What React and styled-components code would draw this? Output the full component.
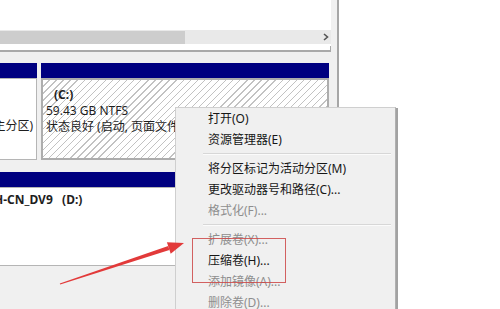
import React from "react";
import styled, { createGlobalStyle } from "styled-components";

const Global = createGlobalStyle`
  html, body { margin: 0; padding: 0; background: #fff; }
  body {
    font-family: "Noto Sans", "Noto Sans CJK SC", sans-serif;
    font-size: 12px;
    color: #1e1e1e;
    overflow: hidden;
  }
`;

const Stage = styled.div`
  position: relative;
  width: 500px;
  height: 309px;
  overflow: hidden;
  display: flex;
  background: #fff;
`;

const Window = styled.div`
  width: 337px;
  height: 100%;
  flex: none;
  background: #f0f0f0;
  border-right: 2px solid #a6a6a6;
  display: flex;
  flex-direction: column;
  overflow: hidden;
`;

const ListView = styled.div`
  position: relative;
  width: 331px;
  height: 52px;
  flex: none;
  box-sizing: border-box;
  background: #fff;
  border-bottom: 2px solid #a9a9a9;
  display: flex;
  flex-direction: column;
  padding-top: 30px;
  &::after {
    content: "";
    position: absolute;
    right: 0;
    bottom: 0;
    width: 1px;
    height: 4px;
    background: #a9a9a9;
  }
`;

const HScroll = styled.div`
  height: 14px;
  background: #e9e9e9;
  display: flex;
  align-items: center;
  justify-content: space-between;
`;

const Thumb = styled.div`
  width: 185px;
  height: 13px;
  background: #cdcdcd;
`;

const ScrollArrow = styled.div`
  width: 12px;
  display: flex;
  align-items: center;
  justify-content: center;
  margin-right: -1px;
`;

const DiskArea = styled.div`
  display: flex;
  flex-direction: column;
  gap: 12px;
  padding-top: 11px;
`;

const DiskRow = styled.div`
  display: flex;
  gap: 4px;
  width: 329px;
`;

const Partition = styled.div`
  display: flex;
  flex-direction: column;
  width: ${(p) => p.$w}px;
  flex: ${(p) => (p.$w ? "none" : "1")};
  min-width: 0;
`;

const PartHeader = styled.div`
  height: 15px;
  background: #000080;
`;

const PartBody = styled.div`
  height: ${(p) => p.$h}px;
  box-sizing: border-box;
  border: ${(p) => (p.$selected ? "2px solid #adadad" : "1px solid #b5b5b5")};
  border-left-width: ${(p) => (p.$cutLeft ? 0 : p.$selected ? 2 : 1)}px;
  background: ${(p) =>
    p.$selected
      ? "repeating-linear-gradient(135deg, #ffffff 0 4px, #c2c2c2 4px 5px)"
      : "#ffffff"};
  padding: ${(p) => (p.$selected ? "7px 0 0 3px" : "4px 0 0 0")};
  display: flex;
  flex-direction: column;
  overflow: hidden;
`;

const Line = styled.div`
  height: 16px;
  line-height: 16px;
  white-space: pre;
  display: flex;
  justify-content: ${(p) => (p.$end ? "flex-end" : "flex-start")};
  padding-right: ${(p) => (p.$end ? "3px" : "0")};
  font-weight: ${(p) => (p.$bold ? 700 : 400)};
  margin-left: ${(p) => p.$indent || 0}px;
  color: #1e1e1e;
`;

const Menu = styled.div`
  position: absolute;
  left: 175px;
  top: 107px;
  width: 221px;
  height: 220px;
  box-sizing: border-box;
  background: #f0f0f0;
  border: 1px solid #cfcfcf;
  border-right: 1px solid #b0b0b0;
  box-shadow: 2px 1px 0 #a2a2a2;
  display: flex;
  flex-direction: column;
`;

const Item = styled.div`
  height: 21px;
  line-height: 21px;
  padding-left: 32px;
  white-space: nowrap;
  color: ${(p) => (p.$disabled ? "#8e8e8e" : "#161616")};
`;

const Separator = styled.div`
  height: 8px;
  display: flex;
  align-items: center;
  margin: 0 4px 0 27px;
  &::before {
    content: "";
    flex: 1;
    height: 1px;
    background: #d7d7d7;
    border-bottom: 1px solid #fbfbfb;
  }
`;

const Highlight = styled.div`
  position: absolute;
  left: 192px;
  top: 238px;
  width: 94px;
  height: 45px;
  box-sizing: border-box;
  border: 1px solid rgba(205, 70, 70, 0.85);
  pointer-events: none;
`;

const ArrowLayer = styled.svg`
  position: absolute;
  left: 0;
  top: 0;
  pointer-events: none;
`;

const menuItems = [
  { t: "打开(O)" },
  { t: "资源管理器(E)" },
  { sep: true },
  { t: "将分区标记为活动分区(M)" },
  { t: "更改驱动器号和路径(C)..." },
  { t: "格式化(F)...", d: true },
  { sep: true },
  { t: "扩展卷(X)...", d: true },
  { t: "压缩卷(H)..." },
  { t: "添加镜像(A)...", d: true },
  { t: "删除卷(D)...", d: true },
];

export default function App() {
  return (
    <>
      <Global />
      <Stage>
        <Window>
          <ListView>
            <HScroll>
              <Thumb />
              <ScrollArrow>
                <svg width="6" height="8" viewBox="0 0 6 8">
                  <path d="M1 1 L4.5 4 L1 7" fill="none" stroke="#555" strokeWidth="1.6" />
                </svg>
              </ScrollArrow>
            </HScroll>
          </ListView>
          <DiskArea>
            <DiskRow>
              <Partition $w={37}>
                <PartHeader />
                <PartBody $h={82} $cutLeft style={{ paddingTop: 39 }}>
                  <Line $end>状态良好 (系统, 活动, 主分区)</Line>
                </PartBody>
              </Partition>
              <Partition>
                <PartHeader />
                <PartBody $h={82} $selected>
                  <Line $bold $indent={8}>(C:)</Line>
                  <Line>59.43 GB NTFS</Line>
                  <Line>状态良好 (启动, 页面文件, 故障转储, 主分区)</Line>
                </PartBody>
              </Partition>
            </DiskRow>
            <DiskRow>
              <Partition>
                <PartHeader />
                <PartBody $h={79} $cutLeft>
                  <Line $bold $indent={-6}>{"H-CN_DV9   (D:)"}</Line>
                </PartBody>
              </Partition>
            </DiskRow>
          </DiskArea>
        </Window>
        <Menu>
          {menuItems.map((m, i) =>
            m.sep ? (
              <Separator key={i} />
            ) : (
              <Item key={i} $disabled={m.d}>
                {m.t}
              </Item>
            )
          )}
        </Menu>
        <Highlight />
        <ArrowLayer width="500" height="309" viewBox="0 0 500 309">
          <polygon
            points="60.2,284.5 59.8,283.5 168.2,246.1 169.4,249.9"
            fill="#e23a3a"
          />
          <polygon points="184,243 170.7,253.7 166.9,242.3" fill="#e23a3a" />
        </ArrowLayer>
      </Stage>
    </>
  );
}
